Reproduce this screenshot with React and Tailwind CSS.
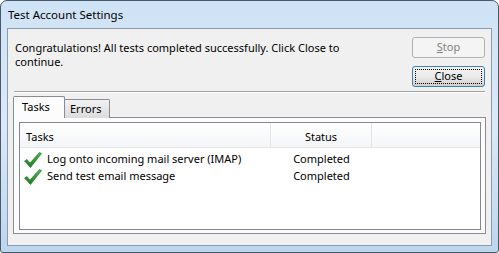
import React from "react";

const font = { fontFamily: '"Noto Sans", "Open Sans", sans-serif' };

const Check = () => (
  <svg width="18" height="16" viewBox="0 0 18 16" className="shrink-0">
    <defs>
      <linearGradient id="ck" x1="0" y1="0" x2="0" y2="1">
        <stop offset="0" stopColor="#4fb84f" />
        <stop offset="1" stopColor="#1d7a1d" />
      </linearGradient>
    </defs>
    <path d="M0.5 9 L3 7.5 L6 11 L15.5 0.5 L17.5 1.5 L6.5 15.5 Z" fill="url(#ck)" stroke="#1a6b1a" strokeWidth="0.6" strokeLinejoin="round" />
  </svg>
);

const rows = [
  { task: "Log onto incoming mail server (IMAP)", status: "Completed" },
  { task: "Send test email message", status: "Completed" },
];

export default function App() {
  return (
    <div className="w-[499px] h-[253px] bg-white" style={font}>
      <div className="w-[499px] h-[253px] flex flex-col border border-[#4b5868] rounded-t-[7px] rounded-b-[3px] bg-gradient-to-b from-[#cfe3f6] via-[#d9e9f8] to-[#bcd6ef] overflow-hidden">
        {/* title bar */}
        <div className="h-[27px] shrink-0 flex items-center pl-[7px] pt-[1px] text-[11.5px] text-black">
          Test Account Settings
        </div>

        {/* client area */}
        <div className="flex-1 mx-[6px] mb-[6px] border border-[#8d9bab] bg-[#f0f0f0] flex flex-col px-[5px] pt-[8px] pb-[11px]">
          <div className="flex items-start">
            <p className="flex-1 pl-[2px] pt-[4px] text-[11px] leading-[14px] text-black">
              Congratulations! All tests completed successfully. Click Close to
              <br />
              continue.
            </p>
            <div className="w-[73px] flex flex-col gap-[8px] mr-[1px]">
              <button className="h-[21px] rounded-[3px] border border-[#adb2b5] bg-[#f4f4f4] text-[11px] text-[#838383]">
                <span className="underline">S</span>top
              </button>
              <button className="h-[21px] rounded-[3px] border border-[#3c7fb1] bg-gradient-to-b from-[#f2f2f2] via-[#ebebeb] to-[#cfcfcf] p-[2px] text-[11px] text-black">
                <span className="flex h-full items-center justify-center border border-dotted border-black">
                  <span className="underline">C</span>lose
                </span>
              </button>
            </div>
          </div>

          {/* separator */}
          <div className="mt-[4px] ml-[1px] mr-[1px] border-t border-[#a0a0a0] border-b border-b-white" />

          {/* tabs */}
          <div className="mt-[3px] flex items-end h-[22px] relative z-10">
            <div className="h-[22px] w-[52px] border border-b-0 border-[#898c95] bg-[#fcfcfc] rounded-t-[2px] pl-[8px] pt-[2px] text-[11px] text-black">
              Tasks
            </div>
            <div className="h-[19px] w-[45px] border border-l-0 border-b-0 border-[#898c95] bg-gradient-to-b from-[#f2f2f2] to-[#dbdbdb] rounded-tr-[2px] pl-[5px] pt-[1px] text-[11px] text-black">
              Errors
            </div>
          </div>
          <div className="-mt-px flex-1 border border-[#898c95] bg-[#fcfcfc] pl-[5px] pr-[4px] pt-[4px] pb-[3px] flex">
            <div className="flex-1 border border-[#828790] bg-white flex flex-col">
              <div className="h-[25px] flex border-b border-[#e5e5e5] bg-gradient-to-b from-white to-[#f4f5f7] text-[11px] text-black">
                <div className="w-[251px] border-r border-[#e3e6ea] flex items-center pl-[6px] pt-[4px]">Tasks</div>
                <div className="w-[101px] border-r border-[#e3e6ea] flex items-center justify-center pt-[4px]">Status</div>
                <div className="flex-1" />
              </div>
              <div className="pt-[3px]">
                {rows.map((r) => (
                  <div key={r.task} className="h-[17px] flex items-center text-[11px] text-black">
                    <div className="w-[251px] flex items-center pl-[4px] gap-[5px]">
                      <Check />
                      <span>{r.task}</span>
                    </div>
                    <div className="w-[101px] text-center">{r.status}</div>
                  </div>
                ))}
              </div>
            </div>
          </div>
        </div>
      </div>
    </div>
  );
}
